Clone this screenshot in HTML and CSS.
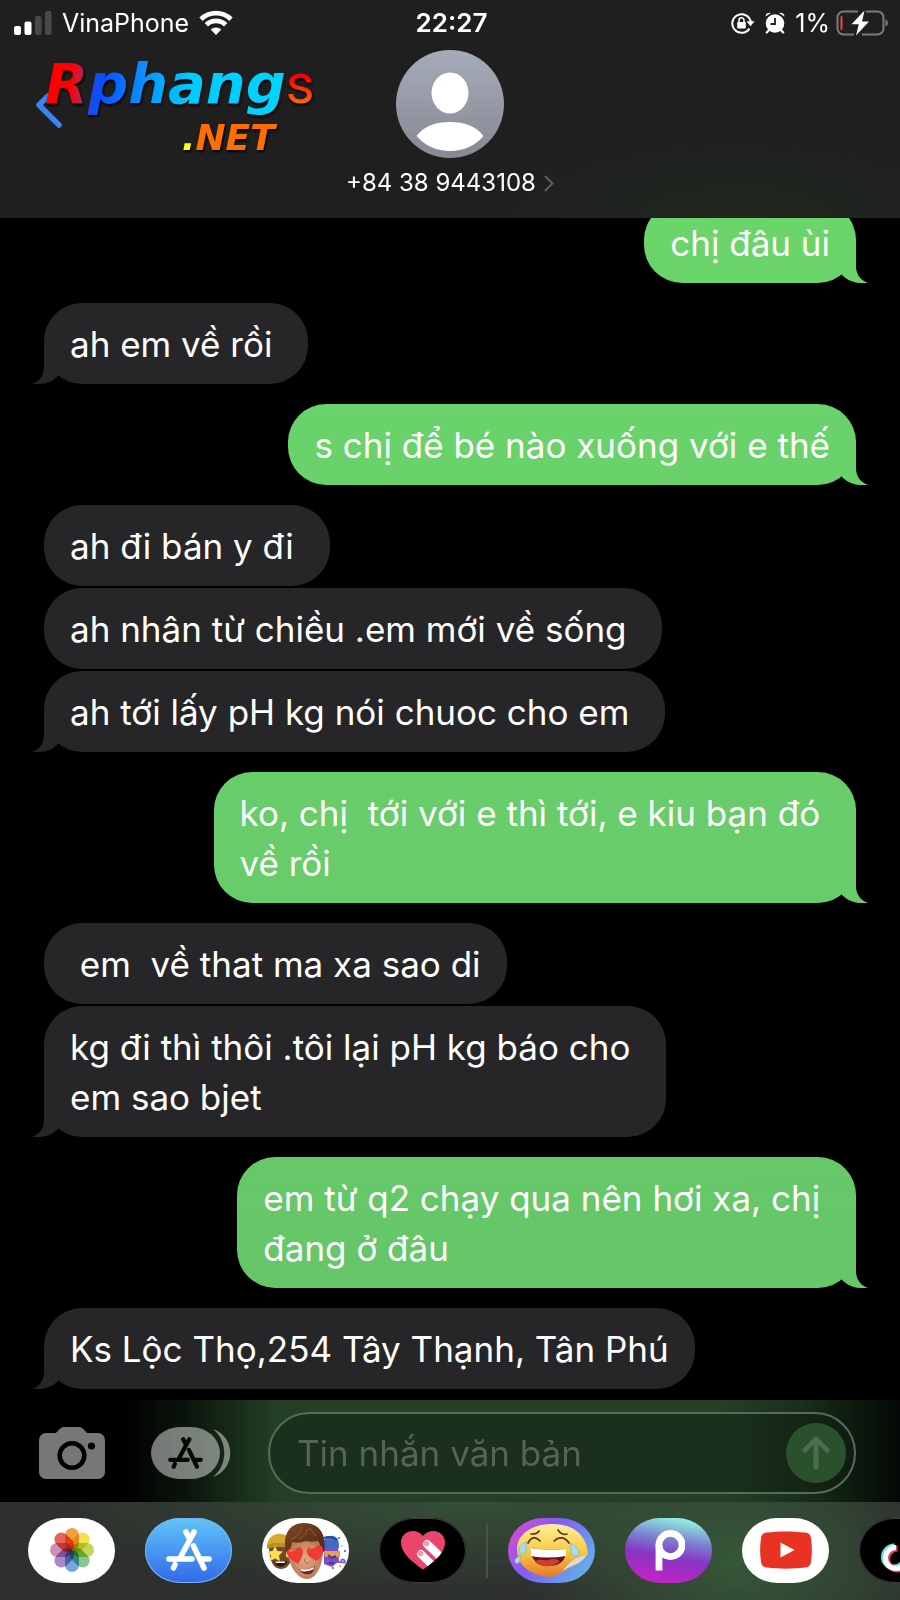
FILE: index.html
```html
<!DOCTYPE html>
<html lang="vi">
<head>
  <meta charset="UTF-8">
  <meta name="viewport" content="width=device-width, initial-scale=1">
  <title>+84 38 9443108</title>
  <link rel="stylesheet" href="styles.css">
</head>
<body>

  <!-- Shared shapes -->
  <svg class="defs" width="0" height="0" aria-hidden="true">
    <symbol id="store" viewBox="0 0 46 42">
      <g fill="none" stroke="currentColor" stroke-width="5.6" stroke-linecap="round">
        <path d="M28 3 13.500 30M20 3l2.500 5M27.500 17 38 39M9 35.500 7.500 39M3 30h23M35 30h8"/>
      </g>
    </symbol>
  </svg>

  <header class="header">
    <div class="status">
      <div class="status-left">
        <svg width="38" height="24" viewBox="0 0 38 24" fill="#fff">
          <rect x="0" y="15" width="7" height="9" rx="2"/>
          <rect x="10.500" y="10.500" width="7" height="13.500" rx="2"/>
          <rect x="21" y="5" width="6.500" height="19" rx="2" fill="#484848"/>
          <rect x="31" y="0" width="6.500" height="24" rx="2" fill="#484848"/>
        </svg>
        <span>VinaPhone</span>
        <svg width="34" height="25" viewBox="0 0 34 25">
          <g fill="none" stroke="#fff" stroke-width="4.800">
            <path d="M2 9.200a21.500 21.500 0 0 1 30 0"/>
            <path d="M7.300 14.700a14 14 0 0 1 19.400 0"/>
          </g>
          <path d="M17 25l-5.300-5.500a8 8 0 0 1 10.600 0z" fill="#fff"/>
        </svg>
      </div>
      <time class="clock">22:27</time>
      <div class="status-right">
        <svg width="24" height="22" viewBox="0 0 24 22">
          <path d="M18.400 16.600A9.300 9.300 0 1 1 19.800 10" fill="none" stroke="#fff" stroke-width="2"/>
          <path d="M15.500 9.300h8l-4 5z" fill="#fff"/>
          <rect x="6.200" y="10" width="8.600" height="6.500" rx="1" fill="#fff"/>
          <path d="M8 10.500V8.300a2.500 2.500 0 0 1 5 0v2.200" fill="none" stroke="#fff" stroke-width="1.500"/>
        </svg>
        <svg width="20" height="22" viewBox="0 0 20 22">
          <circle cx="10" cy="11.500" r="9.300" fill="#fff"/>
          <path d="M.5 4.500A4 4 0 0 1 6 1zM19.500 4.500A4 4 0 0 0 14 1z" fill="#fff"/>
          <path d="M4 18 1.800 20.500M16 18l2.200 2.500" stroke="#fff" stroke-width="2.200" stroke-linecap="round"/>
          <path d="M10 6v6H5.500" fill="none" stroke="#1f1f1f" stroke-width="1.800"/>
        </svg>
        <span>1%</span>
        <svg width="53" height="26" viewBox="0 0 53 26">
          <path d="M22 1.500H7.500a6 6 0 0 0-6 6v11a6 6 0 0 0 6 6H18M30 1.500h11.500a6 6 0 0 1 6 6v11a6 6 0 0 1-6 6H26" fill="none" stroke="#7c7c7c" stroke-width="2"/>
          <path d="M49.500 9a4.500 4.500 0 0 1 0 8z" fill="#7c7c7c"/>
          <rect x="4.500" y="6" width="2" height="14" rx="1" fill="#f0493c"/>
          <path d="M28.500.5 15.500 14.300h7.300L20 25.500l13-14h-7z" fill="#fff"/>
        </svg>
      </div>
    </div>

    <div class="contact">
      <div class="contact-side">
        <button class="back" aria-label="Back">
          <svg width="28" height="46" viewBox="0 0 28 46">
            <path d="M12 14 3 23l20 20" fill="none" stroke="#3b82f5" stroke-width="5.500" stroke-linecap="round" stroke-linejoin="round"/>
          </svg>
        </button>
        <div class="logo">
          <div class="logo-name"><span class="logo-main">Rphang</span><span class="logo-s">s</span></div>
          <div class="logo-net"><span class="logo-dot">.</span>NET</div>
        </div>
      </div>
      <button class="person">
        <svg width="108" height="108" viewBox="0 0 108 108">
          <defs>
            <linearGradient id="avatar" x2="0" y2="1">
              <stop offset="0" stop-color="#a6abb9"/>
              <stop offset="1" stop-color="#858993"/>
            </linearGradient>
          </defs>
          <circle cx="54" cy="54" r="54" fill="url(#avatar)"/>
          <ellipse cx="54" cy="43" rx="18.500" ry="20.500" fill="#fff"/>
          <path d="M20.500 86C28 76 40 72 54 72s26 4 33.500 14C79 96 67 101 54 101s-25-5-33.500-15z" fill="#fff"/>
        </svg>
        <span class="number">+84 38 9443108
          <svg width="10" height="17" viewBox="0 0 10 17">
            <path d="M1 1l7.500 7.500L1 16" fill="none" stroke="#626262" stroke-width="1.800"/>
          </svg>
        </span>
      </button>
    </div>
  </header>

  <main class="chat">
    <p class="bubble out tail">chị đâu ùi</p>
    <p class="bubble in tail">ah em về rồi&nbsp;</p>
    <p class="bubble out tail">s chị để bé nào xuống với e thế</p>
    <p class="bubble in">ah đi bán y đi&nbsp;</p>
    <p class="bubble in joined">ah nhân từ chiều .em mới về sống&nbsp;</p>
    <p class="bubble in joined tail">ah tới lấy pH kg nói chuoc cho em&nbsp;</p>
    <p class="bubble out tail">ko, chị  tới với e thì tới, e kiu bạn đó&nbsp;
về rồi</p>
    <p class="bubble in"> em  về that ma xa sao di</p>
    <p class="bubble in joined tail">kg đi thì thôi .tôi lại pH kg báo cho&nbsp;
em sao bjet</p>
    <p class="bubble out tail">em từ q2 chạy qua nên hơi xa, chị&nbsp;
đang ở đâu</p>
    <p class="bubble in tail">Ks Lộc Thọ,254 Tây Thạnh, Tân Phú</p>
  </main>

  <footer>
    <form class="compose">
      <button type="button" class="tool" aria-label="Camera">
        <svg width="66" height="52" viewBox="0 0 66 52">
          <path d="M7 6h9c3 0 4-6 9-6h15c5 0 6 6 9 6h10a7 7 0 0 1 7 7v32a7 7 0 0 1-7 7H7a7 7 0 0 1-7-7V13a7 7 0 0 1 7-7z" fill="#777"/>
          <circle cx="33" cy="28.500" r="12.300" fill="none" stroke="#000" stroke-width="4.600"/>
          <circle cx="52.500" cy="19" r="3.600" fill="#000"/>
        </svg>
      </button>
      <button type="button" class="tool store" aria-label="Apps">
        <svg width="80" height="52" viewBox="0 0 80 52">
          <defs>
            <linearGradient id="pill">
              <stop offset="0" stop-color="#767876"/>
              <stop offset="1" stop-color="#7b877c"/>
            </linearGradient>
          </defs>
          <rect width="69" height="52" rx="29" ry="26" fill="url(#pill)"/>
          <path d="M62 2c23 8 23 40 0 48 15-12 15-36 0-48z" fill="#7b877c"/>
          <use href="#store" x="17" y="10" width="35" height="32"/>
        </svg>
      </button>
      <div class="field">
        <input type="text" aria-label="Tin nhắn văn bản" placeholder="Tin nhắn văn bản">
        <button type="button" class="send" aria-label="Send">
          <svg width="28" height="34" viewBox="0 0 28 34">
            <path d="M14 31V3M3 14 14 3l11 11" fill="none" stroke="#4e6b51" stroke-width="5" stroke-linecap="round" stroke-linejoin="round"/>
          </svg>
        </button>
      </div>
    </form>

    <nav class="apps">
      <button class="app white" aria-label="Photos">
        <svg class="flower" width="46" height="46" viewBox="-23 -23 46 46">
          <rect x="-7" y="-22" width="14" height="22" rx="7" fill="#f29a33"/>
          <rect x="-7" y="-22" width="14" height="22" rx="7" fill="#f1e04b" transform="rotate(45)"/>
          <rect x="-7" y="-22" width="14" height="22" rx="7" fill="#bcd552" transform="rotate(90)"/>
          <rect x="-7" y="-22" width="14" height="22" rx="7" fill="#7dc48a" transform="rotate(135)"/>
          <rect x="-7" y="-22" width="14" height="22" rx="7" fill="#68a3da" transform="rotate(180)"/>
          <rect x="-7" y="-22" width="14" height="22" rx="7" fill="#a187c7" transform="rotate(225)"/>
          <rect x="-7" y="-22" width="14" height="22" rx="7" fill="#cb89b1" transform="rotate(270)"/>
          <rect x="-7" y="-22" width="14" height="22" rx="7" fill="#e95c52" transform="rotate(315)"/>
        </svg>
      </button>
      <button class="app blue" aria-label="App Store">
        <svg width="46" height="42"><use href="#store"/></svg>
      </button>
      <button class="app white" aria-label="Memoji">
        <svg width="87" height="65" viewBox="0 0 87 65">
          <defs>
            <linearGradient id="hair" x2="1" y2="1">
              <stop offset="0" stop-color="#7d4624"/>
              <stop offset="1" stop-color="#4e2713"/>
            </linearGradient>
            <radialGradient id="skin">
              <stop offset="0" stop-color="#e2ac83"/>
              <stop offset="1" stop-color="#b97c57"/>
            </radialGradient>
          </defs>
          <!-- star eyes, yellow beanie -->
          <path d="M7 28c0 14 4 23 12 23s12-9 12-23z" fill="#704a30"/>
          <path d="M5 29C5 20 12 15 19 16c6 0 9 4 9 4v9z" fill="#d5aa2f"/>
          <path d="M5 27c8-3 15-3 23 0v4c-8-3-15-3-23 0z" fill="#ba9021"/>
          <path d="M13 28l2.500 5 5.500.6-4 4 1 5.500-5-2.600-5 2.600 1-5.500-4-4 5.500-.6z" fill="#ffdc52"/>
          <path d="M24 29l2 4 4 .6-3 3 1 4-4-2z" fill="#ffdc52"/>
          <path d="M12 43c5 1 8 1 13 0-1 7-11 8-13 0z" fill="#32140f"/>
          <path d="M13 43.500h10v1.500H14z" fill="#fff"/>
          <!-- party face, blue hat -->
          <path d="M62 27h14l1 16-7 6-8-3z" fill="#7650c8"/>
          <path d="M61 28c0-8 5-11 10-10 5 1 6 4 6 12z" fill="#356fce"/>
          <path d="M62 20c5-2 9-1 13 2" stroke="#224c9b" stroke-width="2" fill="none"/>
          <path d="M62 33h16v6H63z" fill="#e6a04b"/>
          <circle cx="69" cy="22" r="1.500" fill="#e4443d"/>
          <path d="M74 44c6-1 9 2 9 0s-3-4-4-1" stroke="#7c54cf" stroke-width="1.800" fill="none"/>
          <path d="M66 37l4 3 4-2M67 45h5" stroke="#4e32a0" stroke-width="2" fill="none"/>
          <circle cx="77" cy="20" r="1" fill="#2864e3"/><circle cx="80" cy="28" r="1" fill="#ecc63b"/>
          <circle cx="83" cy="33" r="1" fill="#2864e3"/><circle cx="71" cy="50" r="1" fill="#2864e3"/>
          <circle cx="78" cy="48" r="1" fill="#ed8739"/><circle cx="82" cy="52" r="1" fill="#2864e3"/>
          <!-- heart eyes -->
          <path d="M26 28c0-10 35-10 35 0 1 15-5 33-16 33S24 43 26 28z" fill="url(#skin)"/>
          <path d="M24 35C20 17 27 5 42 5c16 0 23 12 20 29l-3-1c0-4-1-7-3-10-4 1-8 1-12 0-5 2-10 2-14 1 0 4-2 8-6 11z" fill="url(#hair)"/>
          <path d="M29 21c6-2 9-6 11-12M37 21c5-3 8-6 8-10M54 18c-3-3-4-6-7-8" stroke="#9c6136" stroke-width="1" fill="none"/>
          <path d="M36 46c-6-4-12-8-11-12 1-5 6-4 8-1 1-5 7-5 8 0 0 4-2 8-5 13z" fill="#ef3b32"/>
          <path d="M55 43c-7-3-11-7-10-11s6-4 8-1c1-5 7-5 8 0 1 4-2 8-6 12z" fill="#ef3b32"/>
          <path d="M28 34c1-2 2-2 3-1M48 31c1-2 2-2 3-1" stroke="#ff8f83" stroke-width="1.500" fill="none"/>
          <path d="M43 40c-1 5 1 6 4 5" stroke="#aa6949" fill="none"/>
          <path d="M37 51c6 1 11 0 16-3 0 10-12 11-16 3z" fill="#7d211c"/>
          <path d="M38 51c6 1 10 0 14-2v2c-4 2-9 3-13 2z" fill="#fff"/>
        </svg>
      </button>
      <button class="app black" aria-label="Digital Touch">
        <svg width="46" height="40" viewBox="0 0 46 40">
          <defs>
            <clipPath id="heart"><path d="M23 39.500C15 34 1 24 1 12.500 1 1 16-3 23 6 30-3 45 1 45 12.500 45 24 31 34 23 39.500z"/></clipPath>
          </defs>
          <g clip-path="url(#heart)">
            <path d="M0 0h46v40H0z" fill="#eb456d"/>
            <path d="M27 14 45 31M21 24 36 39" stroke="#fff" stroke-width="8" stroke-linecap="round"/>
            <circle cx="26.500" cy="13.500" r="2.800" fill="#f29baf"/>
            <circle cx="20.500" cy="23.500" r="2.800" fill="#f29baf"/>
          </g>
        </svg>
      </button>
      <span class="divider"></span>
      <button class="app violet" aria-label="Emoji stickers">
        <svg width="87" height="65" viewBox="0 0 87 65">
          <defs>
            <linearGradient id="face" x2="0" y2="1">
              <stop offset="0" stop-color="#fff09b"/>
              <stop offset=".55" stop-color="#f8c73e"/>
              <stop offset="1" stop-color="#e4782d"/>
            </linearGradient>
          </defs>
          <path d="M44 6c22 0 35 11 36 31-12 2-22 20-39 22C21 57 9 47 9 31 9 17 23 6 44 6z" fill="url(#face)"/>
          <path d="M79 37C67 39 61 44 54 54c10-5 20-9 25-17z" fill="#d8dbdc"/>
          <path d="M54 54c5-5 12-6 19-10-5 5-12 8-19 10z" fill="#9299a2"/>
          <path d="M20 25c3-6 8-7 12-2M46 23c5-5 11-4 15 2M23 16c4 0 6 0 8-3M50 12c2 3 5 5 9 4" fill="none" stroke="#58391d" stroke-width="1.700" stroke-linecap="round"/>
          <path d="M22 30c12 2 24 2 36 1 1 11-6 17-17 17S22 41 22 30z" fill="#6d1411"/>
          <path d="M22 30c12 2 24 2 36 1v7c-12 2-24 2-35 0z" fill="#fff"/>
          <path d="M27 44c4-4 9-1 13-2 5-2 9-1 12 1-6 7-19 7-25 1z" fill="#cb3d35"/>
          <path d="M19 24c-5 1-9 5-8 9 1 4 6 4 7 0 1-3-1-6 1-9zM62 25c4 2 10 6 9 10-1 5-8 3-8-1 0-3 0-6-1-9zM13 38c-4 1-7 3-6 6 1 2 5 2 5-2z" fill="#a5def0" stroke="#6caed0" stroke-width=".6"/>
        </svg>
      </button>
      <button class="app picsart" aria-label="Picsart">
        <svg width="32" height="44" viewBox="0 0 32 44">
          <g fill="none" stroke="#fff" stroke-width="6.800">
            <circle cx="17.500" cy="17" r="11.600"/>
            <path d="M6 17v25.500"/>
          </g>
        </svg>
      </button>
      <button class="app white" aria-label="YouTube">
        <svg width="52" height="38" viewBox="0 0 52 38">
          <path d="M7 1.500c12-1.500 26-1.500 38 0 4 .5 5.500 2 6 6 1.200 8 1.200 15 0 23-.5 4-2 5.500-6 6-12 1.500-26 1.500-38 0-4-.5-5.500-2-6-6-1.200-8-1.200-15 0-23 .5-4 2-5.500 6-6z" fill="#e83323"/>
          <path d="M20.500 11.500v15L34.500 19z" fill="#fff"/>
        </svg>
      </button>
      <button class="app black tiktok" aria-label="TikTok">
        <svg width="46" height="50" viewBox="0 0 46 50">
          <g fill="none" stroke-width="6">
            <path d="M26 2v30a10.500 10.500 0 1 1-10.500-10.500M26 2c1 8 6 12 13 12" stroke="#65e8e6"/>
            <path d="M29 4v30a10.500 10.500 0 1 1-10.500-10.500M29 4c1 8 6 12 13 12" stroke="#ec3b5e"/>
            <path d="M27.500 3v30A10.500 10.500 0 1 1 17 22.500M27.500 3c1 8 6 12 13 12" stroke="#fff" stroke-width="5"/>
          </g>
        </svg>
      </button>
    </nav>
  </footer>

</body>
</html>
```
FILE: styles.css
```css
* {
  box-sizing: border-box;
}

body {
  margin: 0;
  height: 100vh;
  display: flex;
  flex-direction: column;
  overflow: hidden;
  background: #000;
  color: #fff;
  font-family: Inter, "Noto Sans", sans-serif;
}

button {
  padding: 0;
  border: 0;
  background: none;
  color: inherit;
  font: inherit;
  cursor: pointer;
}

svg {
  display: block;
  flex: none;
}

.defs {
  position: absolute;
}

/* Header */

.header {
  flex: none;
  height: 218px;
  background: radial-gradient(ellipse 300px 100px at 82% 100%, #20271f, transparent), #1f1f1f;
}

.status {
  display: grid;
  grid-template-columns: 1fr auto 1fr;
  align-items: center;
  height: 45px;
  padding: 0 11px 0 14px;
  font-size: 25px;
}

.status-left,
.status-right {
  display: flex;
  align-items: center;
  gap: 10px;
}

.status-right {
  justify-content: flex-end;
}

.status-right span {
  margin-right: -4px;
}

.clock {
  font-size: 26px;
  font-weight: 600;
}

.contact {
  display: grid;
  grid-template-columns: 1fr auto 1fr;
  padding: 5px 36px 0;
}

.contact-side {
  display: flex;
  align-items: flex-start;
}

.back {
  margin-top: 32px;
}

.logo {
  margin-left: -19px;
  font-family: "DejaVu Sans", sans-serif;
  font-weight: bold;
  font-style: italic;
  white-space: nowrap;
  filter: drop-shadow(1px 2px 1px #000);
}

.logo-name {
  font-size: 56px;
  line-height: 68px;
}

.logo-main,
.logo-s {
  -webkit-background-clip: text;
  background-clip: text;
  color: transparent;
}

.logo-main {
  background-image: linear-gradient(95deg, #f00 11%, #d01a35 15%, #2448e0 20%, #0450ff 24%, #0a8cff 40%, #00ccff 60%, #00d4ff);
}

.logo-s {
  background-image: linear-gradient(#f00 40%, #ff7a00 85%);
  font-family: Roboto, sans-serif;
  font-size: 56px;
  font-weight: 400;
  font-style: normal;
}

.logo-net {
  padding-right: 40px;
  color: #ff6f00;
  font-size: 36px;
  line-height: 40px;
  text-align: right;
}

.logo-dot {
  color: #ff0;
}

.person {
  display: flex;
  flex-direction: column;
  align-items: center;
  gap: 10px;
}

.number {
  display: flex;
  align-items: center;
  gap: 8px;
  font-size: 24px;
  line-height: 30px;
}

/* Messages */

.chat {
  flex: 1;
  min-height: 0;
  display: flex;
  flex-direction: column;
  justify-content: flex-end;
  align-items: flex-start;
  overflow: hidden;
  padding: 0 44px 11px;
}

.bubble {
  position: relative;
  flex: none;
  margin: 20px 0 0;
  padding: 16px 26px 15px;
  border-radius: 38px;
  font-size: 35px;
  line-height: 50px;
  white-space: pre-wrap;
}

.in {
  background: #262628;
}

.out {
  align-self: flex-end;
  background: linear-gradient(#6cd86c, #64c267) fixed;
}

.joined {
  margin-top: 2px;
}

.tail::after {
  content: "";
  position: absolute;
  right: -12px;
  bottom: 0;
  width: 26px;
  height: 40px;
  background: inherit;
  clip-path: path("M0 0H14V23C14 31 18 37 26 40C14 41 6 38 0 32Z");
}

.in.tail::after {
  right: auto;
  left: -12px;
  transform: scaleX(-1);
}

/* Compose bar */

footer {
  flex: none;
}

.compose {
  display: flex;
  align-items: center;
  height: 102px;
  padding: 3px 44px 0 39px;
  background: linear-gradient(90deg, #000 14%, #0c160d 21%, #234025 31%, #234025 80%, #17301a 89%, #030804);
}

.store {
  margin: 0 37px 0 46px;
  color: #060906;
}

.field {
  flex: 1;
  min-width: 0;
  display: flex;
  align-items: center;
  height: 82px;
  padding: 0 8px 0 27px;
  border: 2px solid #586a5b;
  border-radius: 41px;
  background: linear-gradient(90deg, #1a301c, #1a2f1c 80%, #101c11);
}

.field input {
  flex: 1;
  min-width: 0;
  padding: 0;
  border: 0;
  outline: 0;
  background: none;
  color: #fff;
  font: inherit;
  font-size: 35px;
}

.field input::placeholder {
  color: #566458;
  opacity: 1;
}

.send {
  display: grid;
  place-items: center;
  width: 60px;
  height: 60px;
  border-radius: 50%;
  background: #29512c;
}

/* App strip */

.apps {
  display: flex;
  align-items: center;
  gap: 30px;
  height: 98px;
  padding: 0 0 2px 28px;
  overflow: hidden;
  background:
    radial-gradient(ellipse 220px 130px at 82% 60%, #365838, transparent),
    radial-gradient(ellipse 420px 90px at 52% 0, #344f36, transparent),
    #2e302e;
}

.app {
  flex: none;
  display: grid;
  place-items: center;
  width: 87px;
  height: 65px;
  border-radius: 36px / 33px;
  overflow: hidden;
}

.white {
  background: #fff;
}

.blue {
  background: linear-gradient(#61c5f8, #3169e8);
  box-shadow: inset 0 0 0 1px #76b5f2;
}

.black {
  background: #000;
  box-shadow: inset 0 0 0 1px #3b3b3b;
}

.violet {
  background: linear-gradient(125deg, #d04dcf 10%, #805cf7 40%, #65a9e9 85%);
}

.picsart {
  background: linear-gradient(10deg, #c124c5 10%, #8735c4 42%, #7b83cf 65%, #91f1e2 92%);
}

.tiktok {
  justify-items: start;
  padding-left: 20px;
}

.flower rect {
  opacity: .95;
  mix-blend-mode: multiply;
}

.divider {
  flex: none;
  width: 2px;
  height: 55px;
  margin: 0 -10px;
  background: #4b504c;
}
```
